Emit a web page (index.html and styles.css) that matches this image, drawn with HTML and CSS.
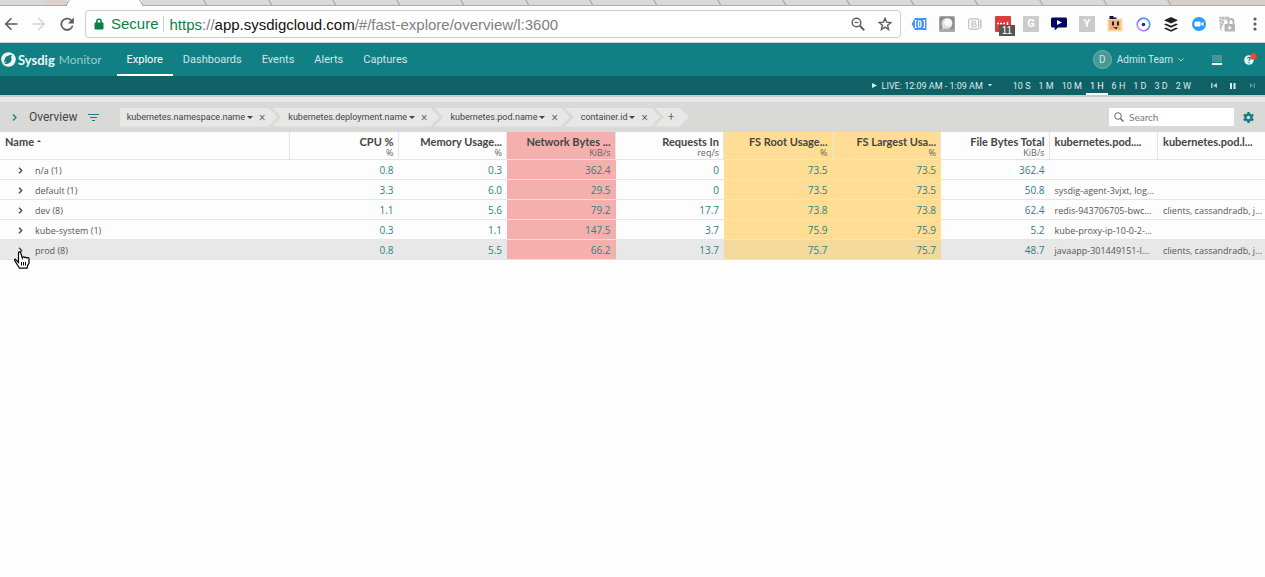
FILE: index.html
```
<!DOCTYPE html>
<html lang="en">
<head>
    <meta charset="UTF-8">
    <meta name="viewport" content="width=device-width, initial-scale=1.0">
    <title>Sysdig Monitor</title>
    <link rel="stylesheet" href="styles.css">
</head>
<body>
    <div class="browser">
        <div class="tabs">
            <div class="tab tab-first"></div>
            <div class="tab tab-active"></div>
            <div class="tab"></div>
            <div class="tab"></div>
            <div class="tab"></div>
            <div class="tab"></div>
            <div class="tab"></div>
            <div class="tab"></div>
            <div class="tab"></div>
            <div class="tab"></div>
            <div class="tab"></div>
            <div class="tab"></div>
            <div class="tab"></div>
            <div class="tab"></div>
            <div class="tab"></div>
            <div class="tab"></div>
            <div class="tab"></div>
            <div class="tab"></div>
            <div class="tab-profile"></div>
        </div>
        <div class="toolbar">
            <div class="history">
                <button aria-label="Back"><svg width="14" height="14" viewBox="0 0 14 14" fill="none" stroke="#5a5a5a" stroke-width="1.600"><path d="M13.500 7H2M7.500 1.200L1.700 7l5.800 5.800"/></svg></button>
                <button aria-label="Forward"><svg width="14" height="14" viewBox="0 0 14 14" fill="none" stroke="#d4d4d4" stroke-width="1.600"><path d="M.5 7H12M6.500 1.200L12.300 7l-5.800 5.800"/></svg></button>
                <button aria-label="Reload"><svg width="14" height="14" viewBox="0 0 14 14"><path d="M11.300 3.400A5.700 5.700 0 1 0 12.600 8.600" fill="none" stroke="#5a5a5a" stroke-width="1.700"/><path d="M13.800.4v6H7.900z" fill="#5a5a5a"/></svg></button>
            </div>
            <div class="address">
                <svg width="10" height="12" viewBox="0 0 10 12"><path d="M2.800 5V3.400a2.200 2.200 0 0 1 4.400 0V5" fill="none" stroke="#0b8043" stroke-width="1.500"/><rect x=".5" y="4.500" width="9" height="7" rx="1" fill="#0b8043"/></svg>
                <span class="secure">Secure</span>
                <div class="url" role="textbox" aria-label="Address" contenteditable="true" spellcheck="false"><span class="scheme">https</span>://<span class="host">app.sysdigcloud.com</span>/#/fast-explore/overview/l:3600</div>
                <button aria-label="Zoom out"><svg width="14" height="14" viewBox="0 0 14 14" fill="none" stroke="#5f5f5f"><circle cx="5.500" cy="5.500" r="4.300" stroke-width="1.400"/><path d="M3.500 5.500h4" stroke-width="1.200"/><path d="M8.800 8.800l4.400 4.400" stroke-width="2"/></svg></button>
                <button aria-label="Bookmark"><svg width="14" height="14" viewBox="0 0 14 14" fill="none" stroke="#5a5a5a" stroke-width="1.400"><path d="M7 1.300l1.600 3.900 4.300.3-3.300 2.800 1 4.200L7 10.200l-3.600 2.300 1-4.200L1.100 5.500l4.300-.3z"/></svg></button>
            </div>
            <div class="extensions">
                <button aria-label="Tag extension"><svg width="16" height="14" viewBox="0 0 16 14"><path d="M4 1h11.500v12H4L.5 7z" fill="#4a94f5"/><path d="M6 3.500H4.500v7H6M12 3.500h1.500v7H12M7.500 4h1.800l1 1.500-1 1.500 1 1.500-1 1.500H7.500z" fill="none" stroke="#fff" stroke-width="1.100"/></svg></button>
                <button aria-label="Bubble extension"><svg width="16" height="16" viewBox="0 0 16 16"><rect width="16" height="16" rx="1.500" fill="#a8a8a8"/><rect x="1" y="1" width="14" height="12" rx="2" fill="#8b8b8b"/><path d="M3.500 13.500V9l4 3z" fill="#dedede"/><circle cx="8" cy="7.400" r="5.500" fill="#dedede"/><circle cx="9" cy="6.500" r="3.800" fill="#f8f8f8"/></svg></button>
                <button aria-label="B extension"><svg width="14" height="12" viewBox="0 0 14 12" fill="none" stroke="#c9c9c9"><rect x=".7" y=".7" width="10" height="10.600" rx="2" stroke-width="1.400"/><path d="M4 3.200h2.300a1.300 1.300 0 0 1 0 2.800H4zM4 6h2.800a1.400 1.400 0 0 1 0 2.900H4z" stroke-width="1.300"/><path d="M12.800 1.500v9" stroke-width="1.600"/></svg></button>
                <button aria-label="Passwords, 11 items" class="counted"><svg width="16" height="16" viewBox="0 0 16 16"><rect width="16" height="16" rx="1" fill="#d8403b"/><path d="M2 7.500h2M5 7.500h2M8 7.500h2M12.500 6v3" stroke="#fff" stroke-width="1.500"/></svg><span class="count">11</span></button>
                <button aria-label="Grammar extension"><span class="letter">G</span></button>
                <button aria-label="Video extension"><svg width="16" height="14" viewBox="0 0 16 14"><path d="M1.500.500h13a1.500 1.500 0 0 1 1.500 1.500v7a1.500 1.500 0 0 1-1.500 1.500H7L3.700 13.500v-3H1.500A1.500 1.500 0 0 1 0 9V2A1.500 1.500 0 0 1 1.500.500z" fill="#040461"/><path d="M6 3l5 2.500L6 8z" fill="#fff"/></svg></button>
                <button aria-label="Y extension"><span class="letter">Y</span></button>
                <button aria-label="Face extension"><svg width="16" height="16" viewBox="0 0 16 16"><path d="M.5 2.500h15v13H.5z" fill="#ffd79f"/><path d="M2 4h11.500v10H2z" fill="#f3b27c"/><path d="M2.500 0h4v1.500h3V3h-7z" fill="#14143c"/><path d="M6 5.500v4M11 5.500v4" stroke="#222" stroke-width="2"/><path d="M6.500 11.500h4M8 12.500h2" fill="none" stroke="#4d3525"/></svg></button>
                <button aria-label="Circle extension"><svg width="15" height="15" viewBox="0 0 15 15"><defs><linearGradient id="ring" x1="1" y1="0" x2="0" y2="1"><stop offset="0" stop-color="#42bdf5"/><stop offset=".5" stop-color="#7c6cf2"/><stop offset="1" stop-color="#d3a7ff"/></linearGradient></defs><circle cx="7.500" cy="7.500" r="6.300" fill="none" stroke="url(#ring)" stroke-width="1.700"/><circle cx="7.500" cy="7.500" r="1.800" fill="#283163"/></svg></button>
                <button aria-label="Buffer"><svg width="14" height="15" viewBox="0 0 14 15" fill="#222"><path d="M7 0l7 3.300-7 3.300-7-3.300z"/><path d="M0 7.400l2-.9 5 2.300 5-2.300 2 .9-7 3.300z"/><path d="M0 11.500l2-.9 5 2.300 5-2.300 2 .9L7 14.800z"/></svg></button>
                <button aria-label="Zoom meetings"><svg width="14" height="14" viewBox="0 0 14 14"><circle cx="7" cy="7" r="7" fill="#2d9cf6"/><rect x="2.500" y="4.500" width="6" height="5" rx="1" fill="#fff"/><path d="M9 6.500l2.500-1.700v4.400L9 7.500z" fill="#fff"/></svg></button>
                <button aria-label="Recorder extension"><svg width="16" height="16" viewBox="0 0 16 16" fill="none"><path d="M0 .5h10v4H5v4H3v6H1V6H0z" fill="#dcdcdc"/><path d="M1.500 1v12M9 1v4M3 2h5M3 6h3M2 9h3" stroke="#b0b0b0" stroke-width="1.300" stroke-dasharray="2 1"/><path d="M9.500 8.500V5.500a2.500 2.500 0 0 1 5 0v3" stroke="#b4b4b4" stroke-width="1.800"/><rect x="5.500" y="8" width="10.500" height="7.500" rx="1" fill="#b4b4b4"/><path d="M9.500 9.800l3.500 2-3.500 2z" fill="#fff"/></svg></button>
            </div>
            <button class="menu" aria-label="Browser menu"><svg width="4" height="14" viewBox="0 0 4 14" fill="#5a5a5a"><circle cx="2" cy="2" r="1.600"/><circle cx="2" cy="7" r="1.600"/><circle cx="2" cy="12" r="1.600"/></svg></button>
        </div>
    </div>

    <header class="navbar">
        <a href="#" class="brand">
            <svg width="15" height="15" viewBox="0 0 15 15"><circle cx="7.500" cy="7.500" r="7.300" fill="#eef7f7"/><path d="M11.200 2.800c-3 .1-6 1.200-7.300 3.600-.8 1.500-.5 3.200-1.700 4.200 1 .3 1.400.8 1.800 1.700 1-.7 2.200-.3 3.600-.9 2.800-1.200 3.700-3.900 2.400-6.300z" fill="#118084"/><path d="M2 11.500l3-1.700" stroke="#eef7f7"/></svg>
            <strong>Sysdig</strong>
            <span>Monitor</span>
        </a>
        <nav>
            <a href="#" class="active">Explore</a>
            <a href="#">Dashboards</a>
            <a href="#">Events</a>
            <a href="#">Alerts</a>
            <a href="#">Captures</a>
        </nav>
        <button class="team">
            <span class="avatar">D</span>
            Admin Team
            <svg width="6" height="4" viewBox="0 0 6 4" fill="none" stroke="#b5dadb"><path d="M.5.500L3 3 5.500.500"/></svg>
        </button>
        <button class="layout" aria-label="Layout"><svg width="10" height="10" viewBox="0 0 10 10"><path d="M0 0h10v7H0z" fill="#469a9b"/><path d="M0 2.500h10M0 5.500h10" stroke="#3a9294"/><path d="M0 8h10v2H0z" fill="#fff"/></svg></button>
        <button class="help" aria-label="Help"><svg width="13" height="13" viewBox="0 0 13 13"><circle cx="5" cy="7" r="4.800" fill="#e9f4f4"/><path d="M3.500 5.500c.2-1.600 3-1.500 2.800.1C6.200 6.700 5 6.600 5 8M5 9v1.200" fill="none" stroke="#118084" stroke-width="1.200"/><circle cx="9.500" cy="3.500" r="3.200" fill="#f04a2f"/></svg></button>
    </header>

    <div class="timebar">
        <button class="live">
            <svg width="5" height="5" viewBox="0 0 5 5" fill="#dcecec"><path d="M0 0l5 2.500L0 5z"/></svg>
            LIVE: 12:09 AM - 1:09 AM
            <svg class="caret" width="4" height="3" viewBox="0 0 4 3" fill="#dcecec"><path d="M0 0h4L2 2.500z"/></svg>
        </button>
        <div class="ranges">
            <button>10 S</button>
            <button>1 M</button>
            <button>10 M</button>
            <button class="active">1 H</button>
            <button>6 H</button>
            <button>1 D</button>
            <button>3 D</button>
            <button>2 W</button>
        </div>
        <div class="playback">
            <button aria-label="Previous"><svg width="6" height="5" viewBox="0 0 6 5" fill="#a9cccd"><path d="M0 0h1.500v5H0zM6 0v5L2 2.500z"/></svg></button>
            <button aria-label="Pause"><svg width="6" height="6" viewBox="0 0 6 6" fill="#dcecec"><path d="M0 0h2v6H0zM3.500 0h2v6h-2z"/></svg></button>
            <button aria-label="Next"><svg width="6" height="5" viewBox="0 0 6 5" fill="#66999b"><path d="M4.800 0H6v5H4.800zM1 0v5l3-2.500z"/></svg></button>
        </div>
    </div>

    <div class="filterbar">
        <button class="expand" aria-label="Expand sidebar"><svg width="5" height="7" viewBox="0 0 5 7" fill="none" stroke="#118084" stroke-width="1.300"><path d="M1 .500l3 3-3 3"/></svg></button>
        <h1>Overview</h1>
        <button class="filter" aria-label="Filter"><svg width="11" height="7" viewBox="0 0 11 7" stroke="#118084"><path d="M0 .500h11M2 3.500h7M4 6.500h3"/></svg></button>
        <div class="crumbs">
            <div class="crumb"><button>kubernetes.namespace.name<i class="caret-down"></i></button><button class="remove" aria-label="Remove namespace">×</button></div>
            <div class="crumb"><button>kubernetes.deployment.name<i class="caret-down"></i></button><button class="remove" aria-label="Remove deployment">×</button></div>
            <div class="crumb"><button>kubernetes.pod.name<i class="caret-down"></i></button><button class="remove" aria-label="Remove pod">×</button></div>
            <div class="crumb"><button>container.id<i class="caret-down"></i></button><button class="remove" aria-label="Remove container">×</button></div>
            <div class="crumb crumb-add"><button aria-label="Add grouping">+</button></div>
        </div>
        <label class="search">
            <svg width="10" height="10" viewBox="0 0 10 10" fill="none" stroke="#666"><circle cx="4" cy="4" r="3.300"/><path d="M6.500 6.500l3 3" stroke-width="1.500"/></svg>
            <input type="text" placeholder="Search" aria-label="Search">
        </label>
        <button class="settings" aria-label="Settings"><svg width="11" height="11" viewBox="0 0 11 11"><circle cx="5.500" cy="5.500" r="3" fill="none" stroke="#118084" stroke-width="2.400"/><path d="M5.500 0v2M5.500 9v2M.7 2.800l1.800 1M8.500 7.200l1.800 1M.7 8.200l1.800-1M8.500 3.800l1.800-1" stroke="#118084" stroke-width="2.400"/></svg></button>
    </div>

    <main>
        <table>
            <thead>
                <tr>
                    <th class="name">Name <i class="sort"></i></th>
                    <th>CPU %<small>%</small></th>
                    <th>Memory Usage...<small>%</small></th>
                    <th class="red">Network Bytes ...<small>KiB/s</small></th>
                    <th>Requests In<small>req/s</small></th>
                    <th class="yellow">FS Root Usage...<small>%</small></th>
                    <th class="yellow">FS Largest Usa...<small>%</small></th>
                    <th>File Bytes Total<small>KiB/s</small></th>
                    <th class="label">kubernetes.pod....</th>
                    <th class="label">kubernetes.pod.l...</th>
                </tr>
            </thead>
            <tbody>
                <tr>
                    <td class="name"><button aria-label="Expand n/a"><svg width="5" height="7" viewBox="0 0 5 7"><path d="M1 .700l2.800 2.800L1 6.300"/></svg></button>n/a (1)</td>
                    <td>0.8</td><td>0.3</td><td class="red">362.4</td><td>0</td>
                    <td class="yellow">73.5</td><td class="yellow">73.5</td><td>362.4</td>
                    <td class="label"></td><td class="label"></td>
                </tr>
                <tr>
                    <td class="name"><button aria-label="Expand default"><svg width="5" height="7" viewBox="0 0 5 7"><path d="M1 .700l2.800 2.800L1 6.300"/></svg></button>default (1)</td>
                    <td>3.3</td><td>6.0</td><td class="red">29.5</td><td>0</td>
                    <td class="yellow">73.5</td><td class="yellow">73.5</td><td>50.8</td>
                    <td class="label">sysdig-agent-3vjxt, log...</td><td class="label"></td>
                </tr>
                <tr>
                    <td class="name"><button aria-label="Expand dev"><svg width="5" height="7" viewBox="0 0 5 7"><path d="M1 .700l2.800 2.800L1 6.300"/></svg></button>dev (8)</td>
                    <td>1.1</td><td>5.6</td><td class="red">79.2</td><td>17.7</td>
                    <td class="yellow">73.8</td><td class="yellow">73.8</td><td>62.4</td>
                    <td class="label">redis-943706705-bwc...</td><td class="label">clients, cassandradb, j...</td>
                </tr>
                <tr>
                    <td class="name"><button aria-label="Expand kube-system"><svg width="5" height="7" viewBox="0 0 5 7"><path d="M1 .700l2.800 2.800L1 6.300"/></svg></button>kube-system (1)</td>
                    <td>0.3</td><td>1.1</td><td class="red">147.5</td><td>3.7</td>
                    <td class="yellow">75.9</td><td class="yellow">75.9</td><td>5.2</td>
                    <td class="label">kube-proxy-ip-10-0-2-...</td><td class="label"></td>
                </tr>
                <tr class="hovered">
                    <td class="name"><button aria-label="Expand prod"><svg width="5" height="7" viewBox="0 0 5 7"><path d="M1 .700l2.800 2.800L1 6.300"/></svg></button>prod (8)
                        <svg class="cursor" width="16" height="18" viewBox="0 0 16 18"><path d="M4.500 11.500L2 8.800C.9 7.600 0 8.500.8 9.800l3.400 5.400 1.300 2h7.600l.4-2.200 1.500-3V7.500c0-1.300-1.700-1.400-2 0-.1-1.600-2-1.700-2.300-.3-.1-1.600-2-1.700-2.400-.2L6.700 1.800C6.300.300 4.300.600 4.500 2.200z" fill="#fff" stroke="#000" stroke-width="1.200"/><path d="M7.500 11v3.500M9.500 11v3.500M11.500 11v3.500" stroke="#000"/></svg>
                    </td>
                    <td>0.8</td><td>5.5</td><td class="red">66.2</td><td>13.7</td>
                    <td class="yellow">75.7</td><td class="yellow">75.7</td><td>48.7</td>
                    <td class="label">javaapp-301449151-l...</td><td class="label">clients, cassandradb, j...</td>
                </tr>
            </tbody>
        </table>
    </main>
</body>
</html>
```
FILE: styles.css
```
* {
    margin: 0;
    padding: 0;
    box-sizing: border-box;
}
body {
    background: #fdfdfd;
    color: #444;
    font-family: Roboto, sans-serif;
    font-size: 11px;
    min-height: 100vh;
}
button {
    display: flex;
    align-items: center;
    justify-content: center;
    background: none;
    border: none;
    color: inherit;
    font: inherit;
    white-space: nowrap;
    cursor: pointer;
}
a {
    color: inherit;
    text-decoration: none;
}
svg {
    flex: none;
}

/* browser */
.tabs {
    display: flex;
    height: 6px;
    background: #d9d9d7;
    overflow: hidden;
}
.tab {
    flex: 1;
    border-bottom: 1px solid #adadad;
    position: relative;
}
.tab::after {
    content: "";
    position: absolute;
    top: 0;
    right: 0;
    width: 1px;
    height: 6px;
    background: #999;
    transform: skewX(30deg);
}
.tab-first {
    flex: none;
    width: 67px;
    background: linear-gradient(to right, #d9d9d7 40px, #dfd0cd 50px);
}
.tab-first::after {
    display: none;
}
.tab-active {
    flex: none;
    width: 75px;
    background: #fff;
    border-bottom-color: #fff;
}
.tab-active::before {
    content: "";
    position: absolute;
    top: 0;
    left: 0;
    width: 1px;
    height: 6px;
    background: #999;
    transform: skewX(-30deg);
}
.tab-profile {
    width: 95px;
    background: #ddcccc;
    border-bottom: 1px solid #adadad;
}
.toolbar {
    display: flex;
    align-items: center;
    height: 37px;
    padding-left: 4px;
    background: #fdfdfd;
    border-bottom: 1px solid #cfcfcf;
}
.history {
    display: flex;
    gap: 14px;
    margin-right: 11px;
}
.address {
    flex: 1;
    display: flex;
    align-items: center;
    height: 28px;
    padding: 0 8px;
    background: #fff;
    border: 1px solid #ccc;
    border-radius: 4px;
    font-family: "Liberation Sans", sans-serif;
    font-size: 15px;
}
.secure {
    margin-left: 7px;
    padding-right: 4px;
    border-right: 1px solid #ccc;
    line-height: 16px;
    color: #0b8043;
}
.url {
    flex: 1;
    padding-left: 6px;
    color: #808080;
    white-space: nowrap;
    outline: none;
}
.url .scheme {
    color: #0b8043;
}
.url .host {
    color: #111;
}
.address button + button {
    margin-left: 13px;
}
.extensions {
    display: flex;
    margin-left: 4px;
}
.extensions button {
    width: 28px;
    height: 16px;
}
.letter {
    width: 16px;
    background: #cbcbcb;
    color: #fff;
    font: bold 11px/16px Roboto, sans-serif;
}
.counted {
    position: relative;
}
.count {
    position: absolute;
    top: 9px;
    left: 10px;
    width: 16px;
    background: #555;
    color: #fff;
    font: 10px/11px "Liberation Sans", sans-serif;
}
.menu {
    width: 20px;
    margin-left: 4px;
}

/* app header */
.navbar {
    display: flex;
    align-items: center;
    height: 33px;
    background: #118084;
    color: #cfe6e6;
}
.brand {
    display: flex;
    align-items: center;
    gap: 2px;
    margin-left: 1px;
    font-family: Lato, sans-serif;
    font-size: 13px;
}
.brand strong {
    color: #eef7f7;
}
.brand span {
    margin-left: 2px;
    color: #9bcbcc;
    font-size: 12px;
}
nav {
    flex: 1;
    display: flex;
    align-self: stretch;
    margin-left: 15px;
}
nav a {
    padding: 0 10px;
    line-height: 33px;
}
nav a.active {
    color: #fff;
    box-shadow: inset 0 -2px #fff;
}
.team {
    font-size: 10px;
}
.team .avatar {
    width: 19px;
    margin-right: 5px;
    background: #4a9797;
    border: 1px solid #77b2b3;
    border-radius: 50%;
    line-height: 17px;
}
.team svg {
    margin-left: 5px;
}
.layout {
    margin-left: 28px;
}
.help {
    margin: 0 8px 0 22px;
}

/* time navigation */
.timebar {
    display: flex;
    align-items: center;
    justify-content: flex-end;
    height: 21px;
    padding-right: 10px;
    background: #0e6166;
    border-bottom: 2px solid #c9c9c9;
    color: #dcecec;
    font-size: 9px;
}
.live {
    gap: 5px;
    margin-right: 17px;
}
.ranges {
    display: flex;
}
.ranges button {
    height: 19px;
    padding: 0 4px;
}
.ranges .active {
    color: #fff;
    box-shadow: inset 0 -2px #fff;
}
.playback {
    display: flex;
    gap: 13px;
    margin-left: 16px;
}

/* grouping bar */
.filterbar {
    display: flex;
    align-items: center;
    height: 35px;
    padding: 0 11px 0 12px;
    background: #d9d9d7;
    border-top: 5px solid #e8e8e8;
}
.filterbar h1 {
    margin: 0 10px 0 12px;
    font-size: 12px;
    font-weight: normal;
}
.crumbs {
    flex: 1;
    display: flex;
    margin-left: 21px;
    font-size: 9px;
}
.crumb {
    display: flex;
    align-items: center;
    height: 19px;
    margin-left: -5px;
    padding: 0 12px 0 16px;
    background: #e7e7e7;
    clip-path: polygon(0 0, calc(100% - 9px) 0, 100% 50%, calc(100% - 9px) 100%, 0 100%, 9px 50%);
}
.crumb:first-child {
    margin-left: 0;
    padding-left: 7px;
    clip-path: polygon(0 0, calc(100% - 9px) 0, 100% 50%, calc(100% - 9px) 100%, 0 100%);
}
.crumb .remove {
    margin-left: 6px;
    font-size: 12px;
    font-weight: 300;
}
.crumb-add {
    padding: 0 14px 0 13px;
}
.crumb-add button {
    font-size: 12px;
    font-weight: 300;
}
.caret-down {
    margin-left: 2px;
    border: 3px solid transparent;
    border-top: 3px solid #444;
    border-bottom: 0;
}
.search {
    display: flex;
    align-items: center;
    gap: 5px;
    width: 125px;
    height: 18px;
    padding-left: 5px;
    background: #fff;
    border-radius: 1px;
}
.search input {
    flex: 1;
    min-width: 0;
    border: none;
    outline: none;
    font: 10px Lato, sans-serif;
}
.search input::placeholder {
    color: #777;
}
.settings {
    margin-left: 9px;
}

/* metrics table */
table {
    width: 100%;
    table-layout: fixed;
    border-collapse: separate;
    border-spacing: 0;
}
th {
    height: 28px;
    padding: 3px 4px 0 0;
    border-right: 1px solid #e4e4e4;
    border-bottom: 1px solid #e4e4e4;
    font: bold 11px/14px Lato, sans-serif;
    text-align: right;
    vertical-align: top;
    white-space: nowrap;
}
th:last-child {
    width: 107px;
    border-right: none;
}
th small {
    display: block;
    color: #666;
    font: 9px/8px "Open Sans", sans-serif;
}
th.name {
    width: 290px;
    padding-left: 5px;
    text-align: left;
}
td {
    height: 20px;
    padding: 2px 5px 0 0;
    border-bottom: 1px solid #e4e4e4;
    color: #288486;
    font: 10px/17px "Open Sans", sans-serif;
    text-align: right;
    white-space: nowrap;
}
td.name {
    position: relative;
    padding-left: 18px;
    color: #555;
    font-size: 9px;
    text-align: left;
}
td.name button {
    display: inline-block;
    width: 17px;
    text-align: left;
}
td.name button path {
    fill: none;
    stroke: #444;
    stroke-width: 1.3;
}
th.label,
td.label {
    padding-left: 5px;
    padding-right: 0;
    text-align: left;
}
td.label {
    color: #555;
    font-size: 9px;
}
.red {
    background: #f5b0ae;
}
.yellow {
    background: #ffdd94;
}
.hovered td {
    background: #e8e8e8;
}
.hovered td.red {
    background: #f5b0ae;
}
.hovered td.yellow {
    background: #f4d99d;
}
.sort {
    display: inline-block;
    border: 2px solid transparent;
    border-top: 0;
    border-bottom: 2px solid #444;
    vertical-align: 4px;
}
.cursor {
    position: absolute;
    top: 11px;
    left: 14px;
}
```
